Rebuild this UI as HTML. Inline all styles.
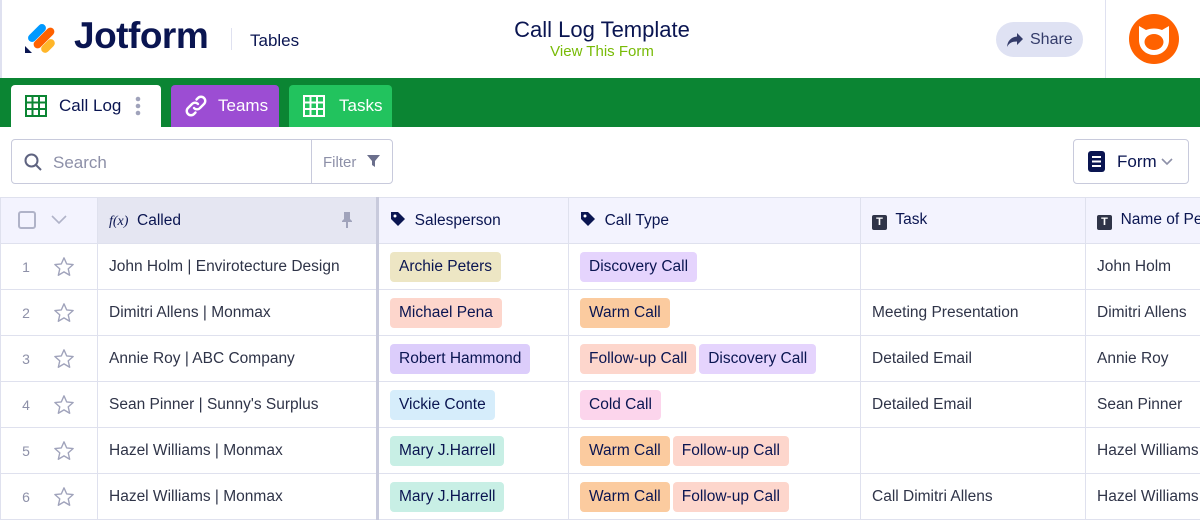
<!DOCTYPE html>
<html><head><style>
*{box-sizing:border-box;margin:0;padding:0}
body{width:1200px;height:520px;overflow:hidden;background:#fff;font-family:"Liberation Sans",sans-serif;color:#0a1551;position:relative}
.hdr{position:absolute;left:0;top:0;width:1200px;height:78px;background:#fff;border-left:2px solid #dfe1f0}
.green{position:absolute;top:78px;left:0;width:1200px;height:49px;background:#0b8533}
.tab{position:absolute;top:85px;height:42px;border-radius:4px 4px 0 0;display:flex;align-items:center;font-size:17px;color:#fff}
.tool{position:absolute;top:127px;left:0;width:1200px;height:70px}
table{position:absolute;top:197px;left:0;border-collapse:collapse;table-layout:fixed;width:1210px}
td,th{border:1px solid #dfe1ee;height:46px;font-size:15.5px;white-space:nowrap;overflow:hidden;text-align:left;padding:0 11px;font-weight:normal;color:#2f3448;vertical-align:middle}
th{background:#f3f3fe;color:#0a1551;height:46px;font-size:15.5px}
th.c{background:#e5e6f2}
.tg{display:inline-block;padding:6px 9px;border-radius:4px;margin-right:3px;color:#0a1551;font-size:15.5px}
.rn{display:flex;align-items:center;height:44px}
.n{color:#8d90a8;font-size:14px;width:16px;text-align:center;margin-left:17px}
.rn svg{margin-left:19px}
.thick{border-right:3px solid #c8cadc}
</style></head><body>
<div class="hdr">
<svg style="position:absolute;left:22px;top:20px" width="34" height="34" viewBox="0 0 34 34">
<rect x="2" y="9" width="22" height="8" rx="4" transform="rotate(-45 13 13)" fill="#0099ff"/>
<rect x="7" y="14" width="26" height="8" rx="4" transform="rotate(-45 20 18)" fill="#ff6100"/>
<rect x="16" y="22" width="16" height="8" rx="4" transform="rotate(-45 24 26)" fill="#ffb629"/>
<path d="M1 26 L1 33 L8 33 Z" fill="#0a1551"/></svg>
<div style="position:absolute;left:72px;top:15px;font-size:37px;font-weight:bold;color:#0a1551;letter-spacing:-0.5px">Jotform</div>
<div style="position:absolute;left:229px;top:28px;width:1px;height:22px;background:#dfe1f0"></div>
<div style="position:absolute;left:248px;top:31px;font-size:17px;color:#0a1551">Tables</div>
<div style="position:absolute;left:0;width:1200px;top:17px;text-align:center;font-size:22px;color:#0a1551">Call Log Template</div>
<div style="position:absolute;left:0;width:1200px;top:43px;text-align:center;font-size:15px;color:#78bb07">View This Form</div>
<div style="position:absolute;left:994px;top:22px;width:87px;height:35px;border-radius:18px;background:#dfe2f3;font-size:16px;color:#343c6a;display:flex;align-items:center;padding-left:10px">
<svg width="18" height="16" viewBox="0 0 18 16"><path d="M11 1 L17 7 L11 13 L11 9.5 C6 9.5 3 11 1 15 C1.5 9 5 5 11 4.5 Z" fill="#343c6a"/></svg><span style="margin-left:6px">Share</span></div>
<div style="position:absolute;left:1103px;top:0;width:1px;height:78px;background:#dfe1f0"></div>
<svg style="position:absolute;left:1127px;top:14px" width="50" height="50" viewBox="0 0 50 50"><circle cx="25" cy="25" r="25" fill="#ff6100"/><path d="M10 12 L17 16 C22 14 28 14 33 16 L40 12 L40 26 C40 35 33 41 25 41 C17 41 10 35 10 26 Z" fill="#fff"/><ellipse cx="25" cy="28" rx="9.5" ry="8" fill="#ff6100"/></svg>
</div>
<div class="green"></div>
<div class="tab" style="left:11px;width:150px;background:#fff;color:#0a1551">
<svg style="margin-left:14px" width="22" height="22" viewBox="0 0 22 22"><rect x="1" y="1" width="20" height="20" fill="none" stroke="#0b8533" stroke-width="2"/><path d="M1 7.5H21M1 14H21M7.5 1V21M14 1V21" stroke="#0b8533" stroke-width="2"/></svg>
<span style="margin-left:12px">Call Log</span>
<svg style="margin-left:14px" width="6" height="20" viewBox="0 0 6 20"><circle cx="3" cy="3" r="2.3" fill="#a0a3bb"/><circle cx="3" cy="10" r="2.3" fill="#a0a3bb"/><circle cx="3" cy="17" r="2.3" fill="#a0a3bb"/></svg></div>
<div class="tab" style="left:171px;width:108px;background:#9c4dd3">
<svg style="margin-left:13px" width="24" height="24" viewBox="0 0 24 24" fill="none" stroke="#fff" stroke-width="2.4" stroke-linecap="round"><path d="M10 14 a4 4 0 0 0 6 0 l4-4 a4 4 0 0 0-6-6 l-1.5 1.5"/><path d="M14 10 a4 4 0 0 0-6 0 l-4 4 a4 4 0 0 0 6 6 l1.5-1.5"/></svg>
<span style="margin-left:10px">Teams</span></div>
<div class="tab" style="left:289px;width:103px;background:#22c35e">
<svg style="margin-left:14px" width="22" height="22" viewBox="0 0 22 22"><rect x="1" y="1" width="20" height="20" fill="none" stroke="#fff" stroke-width="2"/><path d="M1 7.5H21M1 14H21M7.5 1V21M14 1V21" stroke="#fff" stroke-width="2"/></svg>
<span style="margin-left:14px">Tasks</span></div>
<div class="tool">
<div style="position:absolute;left:11px;top:12px;width:382px;height:45px;border:1px solid #c8cadc;border-radius:4px"></div>
<div style="position:absolute;left:311px;top:13px;width:1px;height:43px;background:#c8cadc"></div>
<svg style="position:absolute;left:24px;top:26px" width="18" height="18" viewBox="0 0 18 18" fill="none" stroke="#5e6380" stroke-width="2"><circle cx="7.5" cy="7.5" r="6"/><path d="M12 12L17 17"/></svg>
<div style="position:absolute;left:53px;top:26px;font-size:17px;color:#8d90a8">Search</div>
<div style="position:absolute;left:323px;top:27px;font-size:15px;color:#8d90a8">Filter</div>
<svg style="position:absolute;left:367px;top:28px" width="13" height="13" viewBox="0 0 13 13"><path d="M0 0H13L8 6V12L5 10V6Z" fill="#6b6f8c"/></svg>
<div style="position:absolute;left:1073px;top:12px;width:116px;height:45px;border:1px solid #c8cadc;border-radius:4px"></div>
<svg style="position:absolute;left:1088px;top:24px" width="17" height="21" viewBox="0 0 17 21"><rect width="17" height="21" rx="3" fill="#0a1551"/><path d="M4 6H13M4 10.5H13M4 15H13" stroke="#fff" stroke-width="2"/></svg>
<div style="position:absolute;left:1117px;top:25px;font-size:17px;color:#0a1551">Form</div>
<svg style="position:absolute;left:1161px;top:31px" width="12" height="8" viewBox="0 0 12 8"><path d="M1 1L6 6L11 1" stroke="#8d90a8" stroke-width="1.6" fill="none"/></svg>
</div>
<table>
<colgroup><col style="width:97px"><col style="width:280px"><col style="width:191px"><col style="width:292px"><col style="width:225px"><col style="width:125px"></colgroup>
<tr><th><span style="display:inline-block;width:18px;height:18px;border:2px solid #b0b3c8;border-radius:3px;vertical-align:middle;margin-left:6px"></span><svg style="margin-left:15px;vertical-align:middle" width="16" height="10" viewBox="0 0 16 10"><path d="M1 1L8 8L15 1" stroke="#b0b3c8" stroke-width="1.6" fill="none"/></svg></th>
<th class="c thick"><i style="font-family:'Liberation Serif',serif;font-size:14px">f(x)</i>&nbsp; Called<svg style="float:right;margin-right:12px" width="12" height="16" viewBox="0 0 12 16"><path d="M3 0H9V7L11 9V10H7V16H5V10H1V9L3 7Z" fill="#a0a3bb"/></svg></th>
<th><svg width="16" height="16" viewBox="0 0 16 16" style="vertical-align:-2px"><path d="M1 1H8L15 8L8 15L1 8Z" fill="#0a1551"/><circle cx="5" cy="5" r="1.5" fill="#fff"/></svg>&nbsp; Salesperson</th>
<th><svg width="16" height="16" viewBox="0 0 16 16" style="vertical-align:-2px"><path d="M1 1H8L15 8L8 15L1 8Z" fill="#0a1551"/><circle cx="5" cy="5" r="1.5" fill="#fff"/></svg>&nbsp; Call Type</th>
<th><span style="display:inline-block;width:15px;height:15px;background:#2f3448;color:#fff;font-size:11px;text-align:center;line-height:15px;border-radius:2px;font-weight:bold;vertical-align:-1px">T</span>&nbsp; Task</th>
<th><span style="display:inline-block;width:15px;height:15px;background:#2f3448;color:#fff;font-size:11px;text-align:center;line-height:15px;border-radius:2px;font-weight:bold;vertical-align:-1px">T</span>&nbsp; Name of Person</th></tr>
<tr><td style="padding:0"><div class="rn"><span class="n">1</span><svg width="22" height="22" viewBox="0 0 24 24"><path d="M12 2L14.9 8.6L22 9.3L16.6 14L18.2 21L12 17.3L5.8 21L7.4 14L2 9.3L9.1 8.6Z" fill="none" stroke="#a0a3bb" stroke-width="1.5" stroke-linejoin="round"/></svg></div></td><td class="thick">John Holm | Envirotecture Design</td><td><span class="tg" style="background:#ede6c4">Archie Peters</span></td><td><span class="tg" style="background:#e5d4fd">Discovery Call</span></td><td></td><td>John Holm</td></tr>
<tr><td style="padding:0"><div class="rn"><span class="n">2</span><svg width="22" height="22" viewBox="0 0 24 24"><path d="M12 2L14.9 8.6L22 9.3L16.6 14L18.2 21L12 17.3L5.8 21L7.4 14L2 9.3L9.1 8.6Z" fill="none" stroke="#a0a3bb" stroke-width="1.5" stroke-linejoin="round"/></svg></div></td><td class="thick">Dimitri Allens | Monmax</td><td><span class="tg" style="background:#fdd6cc">Michael Pena</span></td><td><span class="tg" style="background:#fbcb9f">Warm Call</span></td><td>Meeting Presentation</td><td>Dimitri Allens</td></tr>
<tr><td style="padding:0"><div class="rn"><span class="n">3</span><svg width="22" height="22" viewBox="0 0 24 24"><path d="M12 2L14.9 8.6L22 9.3L16.6 14L18.2 21L12 17.3L5.8 21L7.4 14L2 9.3L9.1 8.6Z" fill="none" stroke="#a0a3bb" stroke-width="1.5" stroke-linejoin="round"/></svg></div></td><td class="thick">Annie Roy | ABC Company</td><td><span class="tg" style="background:#dccdfb">Robert Hammond</span></td><td><span class="tg" style="background:#fdd6cc">Follow-up Call</span><span class="tg" style="background:#e5d4fd">Discovery Call</span></td><td>Detailed Email</td><td>Annie Roy</td></tr>
<tr><td style="padding:0"><div class="rn"><span class="n">4</span><svg width="22" height="22" viewBox="0 0 24 24"><path d="M12 2L14.9 8.6L22 9.3L16.6 14L18.2 21L12 17.3L5.8 21L7.4 14L2 9.3L9.1 8.6Z" fill="none" stroke="#a0a3bb" stroke-width="1.5" stroke-linejoin="round"/></svg></div></td><td class="thick">Sean Pinner | Sunny's Surplus</td><td><span class="tg" style="background:#d6edfb">Vickie Conte</span></td><td><span class="tg" style="background:#fcd5ec">Cold Call</span></td><td>Detailed Email</td><td>Sean Pinner</td></tr>
<tr><td style="padding:0"><div class="rn"><span class="n">5</span><svg width="22" height="22" viewBox="0 0 24 24"><path d="M12 2L14.9 8.6L22 9.3L16.6 14L18.2 21L12 17.3L5.8 21L7.4 14L2 9.3L9.1 8.6Z" fill="none" stroke="#a0a3bb" stroke-width="1.5" stroke-linejoin="round"/></svg></div></td><td class="thick">Hazel Williams | Monmax</td><td><span class="tg" style="background:#c8efe5">Mary J.Harrell</span></td><td><span class="tg" style="background:#fbcb9f">Warm Call</span><span class="tg" style="background:#fdd6cc">Follow-up Call</span></td><td></td><td>Hazel Williams</td></tr>
<tr><td style="padding:0"><div class="rn"><span class="n">6</span><svg width="22" height="22" viewBox="0 0 24 24"><path d="M12 2L14.9 8.6L22 9.3L16.6 14L18.2 21L12 17.3L5.8 21L7.4 14L2 9.3L9.1 8.6Z" fill="none" stroke="#a0a3bb" stroke-width="1.5" stroke-linejoin="round"/></svg></div></td><td class="thick">Hazel Williams | Monmax</td><td><span class="tg" style="background:#c8efe5">Mary J.Harrell</span></td><td><span class="tg" style="background:#fbcb9f">Warm Call</span><span class="tg" style="background:#fdd6cc">Follow-up Call</span></td><td>Call Dimitri Allens</td><td>Hazel Williams</td></tr>
</table>
</body></html>
